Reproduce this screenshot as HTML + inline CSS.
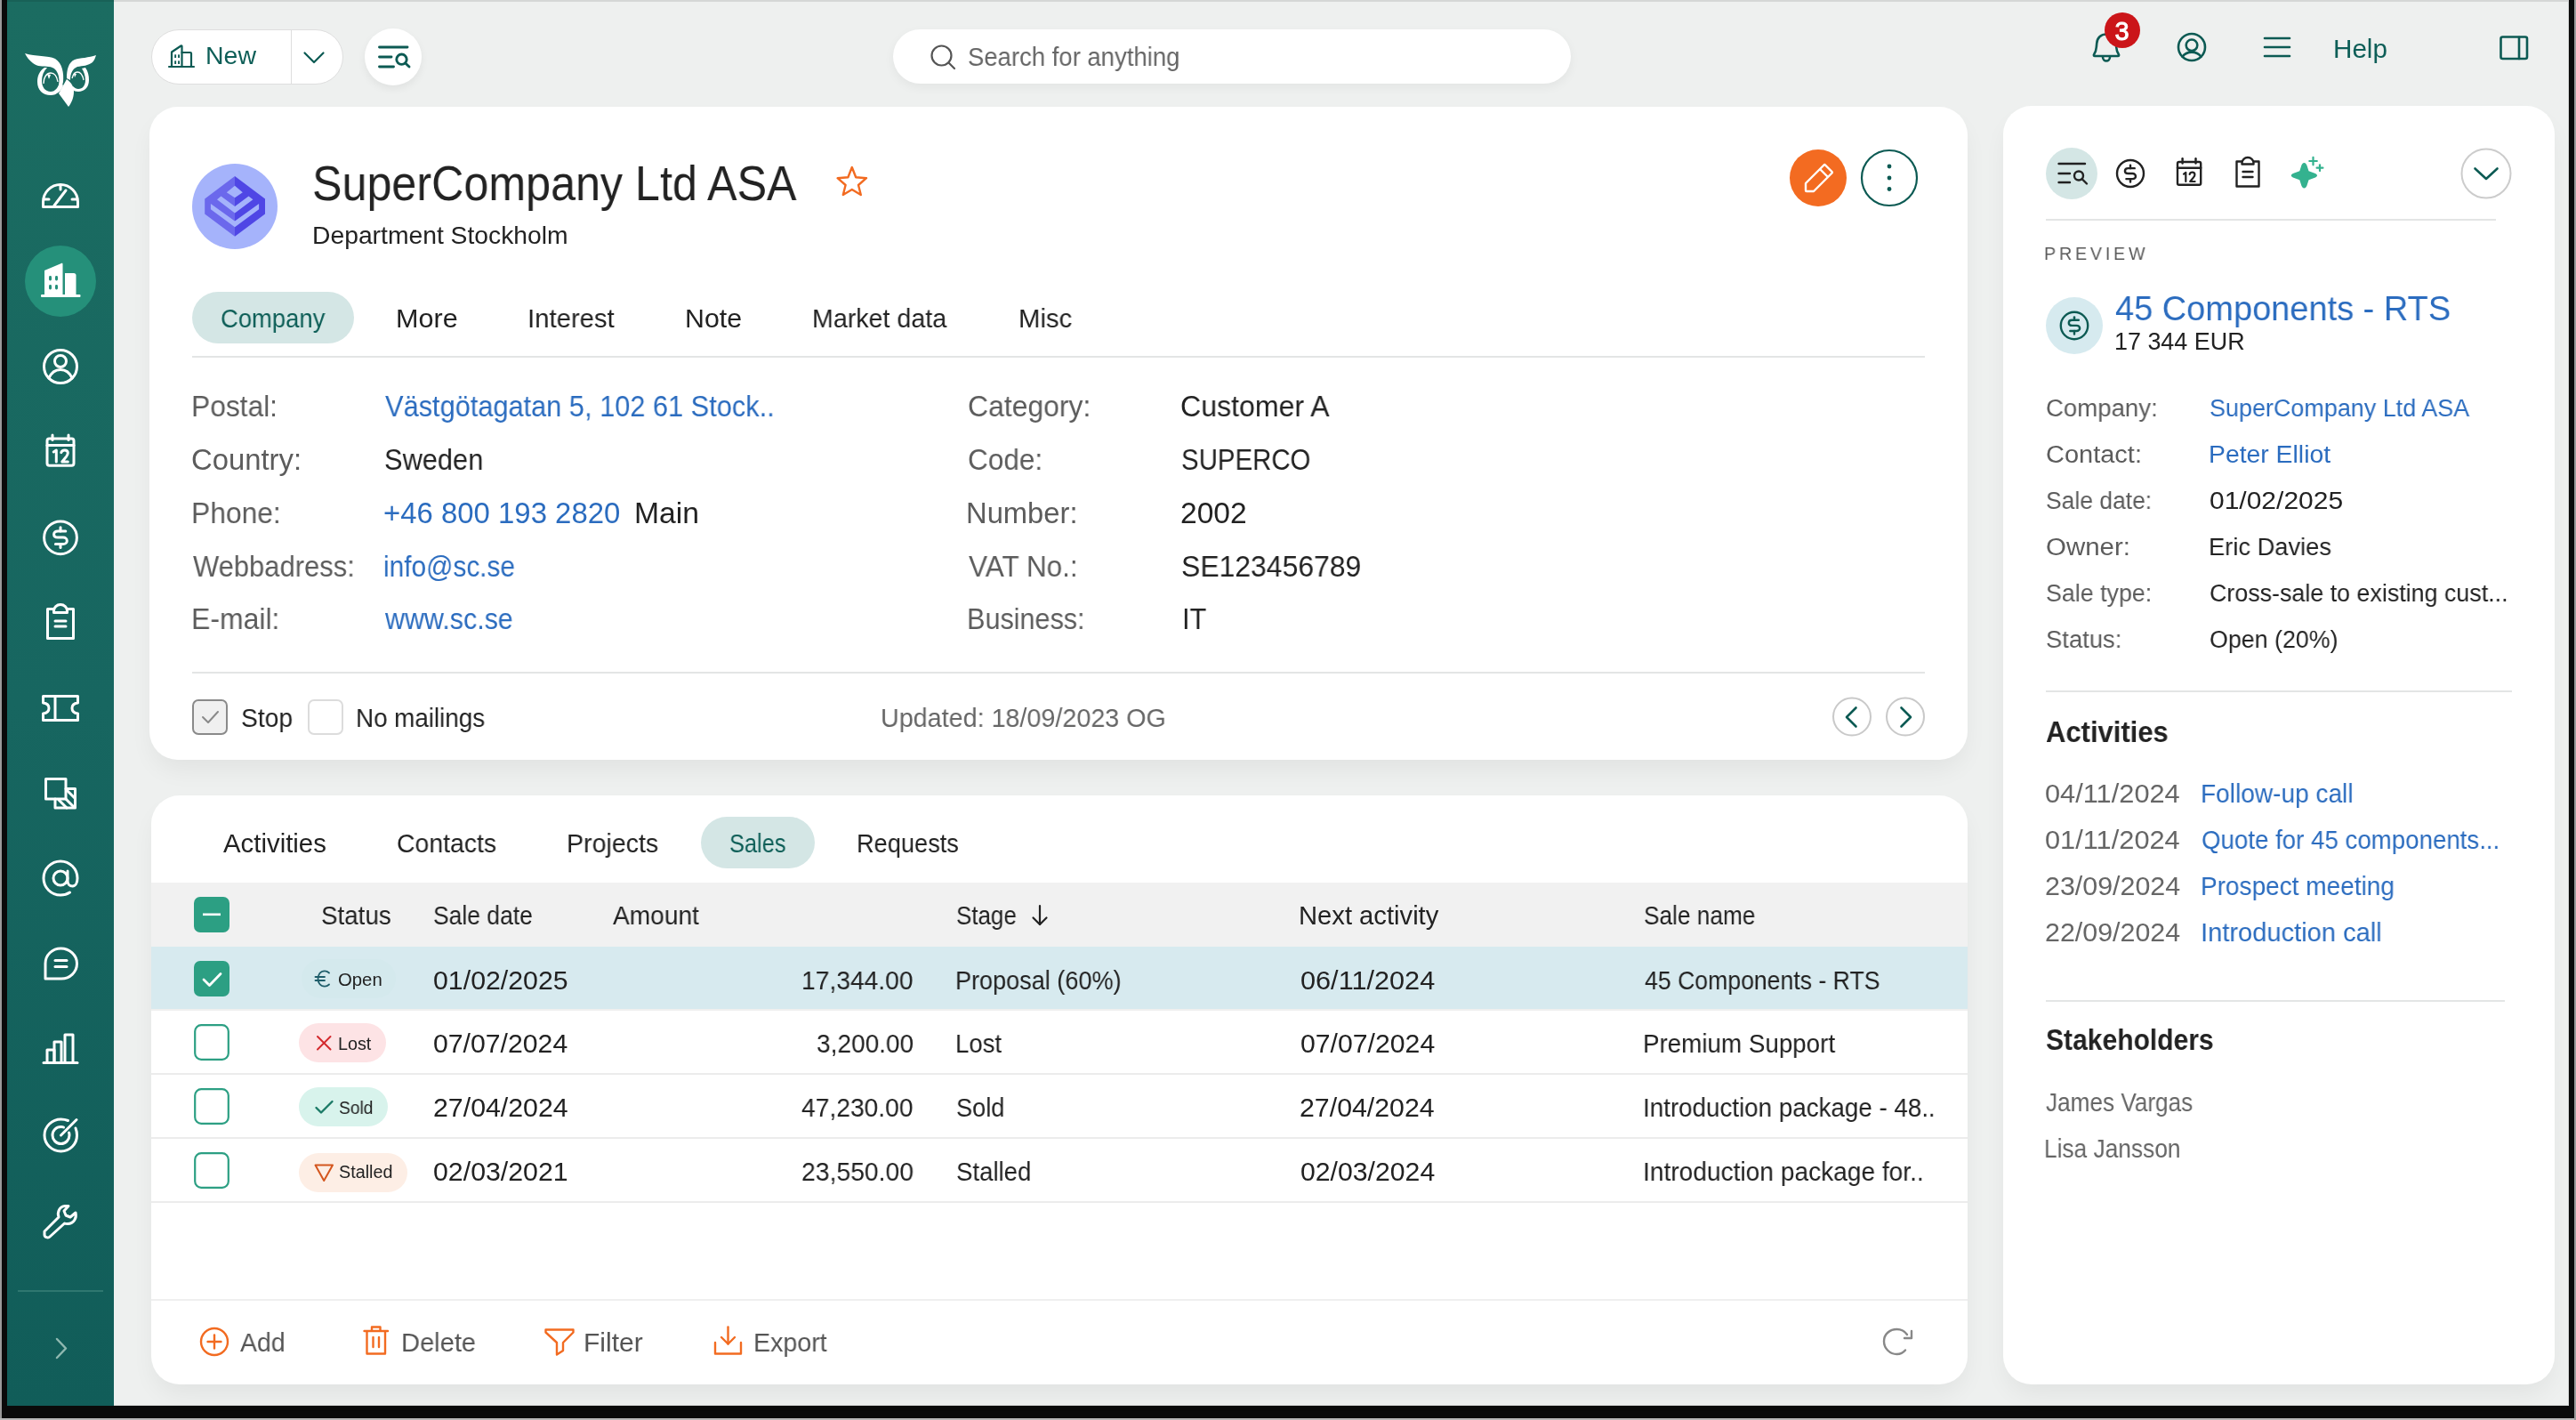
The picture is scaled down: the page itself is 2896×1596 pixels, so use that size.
<!DOCTYPE html>
<html><head><meta charset="utf-8">
<style>
html,body{margin:0;padding:0;width:2896px;height:1596px;overflow:hidden;}
body{position:relative;background:#0a0a0a;font-family:"Liberation Sans",sans-serif;}
.a{position:absolute;box-sizing:border-box;}
.t{position:absolute;white-space:nowrap;line-height:0;height:0;transform-origin:0 0;will-change:transform;font-family:"Liberation Sans",sans-serif;}
svg{position:absolute;overflow:visible;will-change:transform;}
#checkL{left:0;top:0;width:2px;height:1596px;background:#9a9a9a}
#checkB{left:0;top:1594px;width:2896px;height:2px;background:#b8b8b8}
#checkR{left:2894px;top:0;width:2px;height:1596px;background:#9a9a9a}
#win{left:8px;top:0;width:2880px;height:1580px;background:#eef0ef;overflow:hidden;border-radius:0 0 4px 4px;}
#topline{left:128px;top:0;width:2760px;height:2px;background:#d5d7d6;}
#side{left:8px;top:0;width:120px;height:1580px;background:linear-gradient(180deg,#1b6c61 0%,#176660 50%,#115d59 100%);}
.card{position:absolute;background:#fff;border-radius:32px;box-shadow:0 14px 28px -4px rgba(0,0,0,0.06);}
.pill{position:absolute;background:#d4e6e5;border-radius:29px;}
.line{position:absolute;background:#e4e6e6;height:2px;}
</style></head><body>
<div class="a" id="checkL"></div><div class="a" id="checkB"></div><div class="a" id="checkR"></div>
<div class="a" id="win"></div>
<div class="a" id="topline"></div>
<div class="a" style="left:2886.5px;top:0;width:1.5px;height:1580px;background:#d3d5d4"></div>
<div class="a" style="left:128px;top:1578.5px;width:2760px;height:1.5px;background:#d3d5d4"></div>
<div class="a" id="side"></div>
<div class="a" style="left:8px;top:0;width:120px;height:2px;background:rgba(0,0,0,0.1)"></div>

<!-- sidebar logo -->
<svg style="left:20px;top:40px" width="100" height="90" viewBox="0 0 100 90">
  <g fill="#fff">
    <!-- left brow -->
    <path d="M8 20 C20 24 34 22 42 26 C50 31 52 42 51 52 C50 57 48.5 60.5 46.5 63 L44.5 60 C46.5 56 47 51 46 46 C44.5 39 40.5 35.5 35 35 C28 34.5 22 35 17 31 C13 28 10 24 8 20 Z"/>
    <!-- right brow -->
    <path d="M88 22 C80 25 70 25 64 27 C57 30 55 38 55 48 L59 50 C59 42 62 37 67 35 C73 34 79 34 84 30 C86 28 87 25 88 22 Z"/>
    <!-- left eye ring -->
    <path d="M30 36 C24 40 22 46 22 52 C22 61 28 67 37 67 C44 67 49 62 51 56 L47 52 C46 58 42 63 37 63 C31 63 27 58 27 51 C27 45 29 40 33 36 Z"/>
    <!-- right eye ring -->
    <path d="M76 36 C79 40 80 45 80 50 C80 58 75 63 68 63 C65 63 63 62 62 61 L62 57 C64 59 66 60 68 60 C73 60 76 56 76 50 C76 45 74 40 72 37 Z"/>
    <!-- beak -->
    <path d="M46 65 L55 49 C60 53 63 57 63 63 C63 70 60 76 57 80 Z"/>
  </g>
  <g fill="none" stroke="#fff" stroke-width="1.3">
    <path d="M29 54 C29 46 33 42 37 42 C41 42 44 46 45 52"/>
    <path d="M61 48 C62 44 64 41 67 41 C71 41 73 45 74 50"/>
  </g>
  <path d="M33 43 L35 49 L37 44 Z" fill="#fff"/>
  <path d="M63 43 L64 47 L66 43 Z" fill="#fff"/>
</svg>

<!-- sidebar icons -->
<div class="a" style="left:28px;top:276px;width:80px;height:80px;border-radius:40px;background:#25907a"></div>
<g id="sideicons"></g>
<svg style="left:0;top:0" width="140" height="1580" viewBox="0 0 140 1580">
 <g fill="none" stroke="#fff" stroke-width="3" stroke-linecap="round" stroke-linejoin="round">
  <!-- speedometer 47-89 x 205-234 -->
  <path d="M48.5 232.5 L87.5 232.5 L87.5 227 A19.5 19.5 0 0 0 48.5 227 Z"/>
  <path d="M68 208 L68 213"/><path d="M50 224 L55 224"/><path d="M81 224 L86 224"/>
  <path d="M61 231 L74 214"/>
  <!-- contact 48.5-87.3 x 392-432 -->
  <circle cx="68" cy="412" r="18.5"/>
  <circle cx="68" cy="406" r="6.5"/>
  <path d="M55 425 C58 418 63 415.5 68 415.5 C73 415.5 78 418 81 425"/>
  <!-- calendar 50-86 x 487-526 -->
  <rect x="53" y="493" width="30" height="30.2" rx="2.5"/>
  <path d="M53 500.5 L83 500.5"/><path d="M59 489 L59 494.5"/><path d="M77 489 L77 494.5"/>
  <path d="M60.2 508 L63.3 506 L63.3 519"/>
  <path d="M68.8 508.6 C69.3 506.6 70.9 505.9 72.8 505.9 C74.9 505.9 76.3 507.2 76.3 509.1 C76.3 510.6 75.6 511.8 74.6 513.1 L69.8 519 L76.3 519"/>
  <!-- dollar 48.6-87.4 x 584-623 -->
  <circle cx="68" cy="604.3" r="18.4"/>
  <path d="M 73.80 596.90 L 65.00 596.90 C 62.40 596.90 60.60 598.50 60.60 600.60 C 60.60 602.70 62.40 604.10 65.00 604.10 L 71.00 604.10 C 73.40 604.10 75.30 605.70 75.30 607.90 C 75.30 609.90 73.40 611.50 71.00 611.50 L 62.40 611.50"/>
  <path d="M68.00 592.80 L68.00 596.90"/><path d="M68.00 611.50 L68.00 615.60"/>
  <!-- clipboard 51-84.6 x 679-719.5 -->
  <path d="M60 684.5 L53.5 684.5 L53.5 717.5 L82.5 717.5 L82.5 684.5 L76 684.5"/>
  <path d="M60.5 688.5 L60.5 686.5 A7.5 7 0 0 1 75.5 686.5 L75.5 688.5 Z"/>
  <path d="M62 698 L74 698"/><path d="M62 704 L74 704"/>
  <!-- ticket 47-89 x 781-811 -->
  <path d="M48.5 782.5 L87.5 782.5 L87.5 790 C83 790.5 81 793 81 796 C81 799 83 801.5 87.5 802 L87.5 809.5 L48.5 809.5 L48.5 802 C53 801.5 55 799 55 796 C55 793 53 790.5 48.5 790 Z"/>
  <path d="M62 783 L62 809"/>
  <!-- screen 50-86 x 874.5-910 -->
  <rect x="51.5" y="875.5" width="22.5" height="22.5"/>
  <path d="M74 886.5 L84.5 886.5 L84.5 908 L62 908 L62 898"/>
  <path d="M75 888 L84 897"/><path d="M66 899 L75 908"/><path d="M74 898 L83 907"/>
  <!-- @ 48-88 x 967-1006 -->
  <circle cx="68" cy="987" r="8"/>
  <path d="M76 979 L76 990 C76 994 78.5 996 81.5 996 C85 996 87 992 87 987 C87 976.5 78.5 968 68 968 C57.5 968 49 976.5 49 987 C49 997.5 57.5 1006 68 1006 C72 1006 75.5 1005 78.5 1003"/>
  <!-- chat 49.5-88 x 1065-1101.5 -->
  <path d="M51 1100 L51 1083 C51 1073 59 1066 68.5 1066 C78 1066 86.5 1073.5 86.5 1083 C86.5 1092.5 78.5 1100 69 1100 Z"/>
  <path d="M62 1079.5 L75 1079.5"/><path d="M62 1086.5 L75 1086.5"/>
  <!-- chart 48-87 x 1161.5-1196 -->
  <path d="M49 1194.5 L87 1194.5"/>
  <path d="M53 1194 L53 1180 L61 1180 L61 1194"/>
  <path d="M61 1194 L61 1171 L69 1171 L69 1194"/>
  <path d="M73 1194 L73 1163 L82 1163 L82 1194"/>
  <!-- target 48-88 x 1256-1295 -->
  <path d="M85 1268 C86 1270.5 86.5 1273 86.5 1276 C86.5 1286 78.5 1294 68.5 1294 C58.5 1294 50 1286 50 1276 C50 1266 58.5 1258 68.5 1258 C71.5 1258 74 1258.5 76.5 1259.5"/>
  <path d="M77.5 1273 C78 1274 78 1275 78 1276 C78 1281 74 1285.5 68.5 1285.5 C63 1285.5 59 1281 59 1276 C59 1270.5 63 1266.5 68.5 1266.5 C69.5 1266.5 70.5 1266.5 71.5 1267"/>
  <path d="M68.5 1276 L86 1258.5"/>
  <!-- wrench 48-88 x 1354-1391 -->
  <path d="M50 1384 L66 1368 C64 1362 67 1356 73 1355.5 L77 1355.5 L72 1361 L74 1366 L79 1368 L85 1363 C86.5 1369 83 1375 76 1375.5 C74.5 1375.5 73.5 1375.5 72.5 1375 L56 1390 C54 1392 50 1390.5 50 1388 Z"/>
 </g>
 <g fill="#fff">
  <!-- company building 45.6-90.7 x 295-334 -->
  <path d="M50 331 L50 304 L69 296 C70 295.5 70.5 296 70.5 297 L70.5 331 Z"/>
  <path d="M73 331 L73 307 L83 307 C84.5 307 85.5 308 85.5 309.5 L85.5 331 Z"/>
  <rect x="46" y="331" width="44.5" height="3" rx="1"/>
 </g>
 <g fill="#25907a">
  <rect x="55" y="310" width="3" height="5.5" rx="1.4"/><rect x="62" y="310" width="3" height="5.5" rx="1.4"/>
  <rect x="55" y="320" width="3" height="5.5" rx="1.4"/><rect x="62" y="320" width="3" height="5.5" rx="1.4"/>
 </g>
 
 <rect x="20" y="1450" width="96" height="2" fill="#2f7770"/>
 <path d="M64 1505 L74 1515.5 L64 1526" fill="none" stroke="#8fb8b0" stroke-width="2.5" stroke-linecap="round" stroke-linejoin="round"/>
</svg>

<!-- top bar -->
<div class="a" style="left:170px;top:33px;width:216px;height:62px;border-radius:31px;background:#fff;border:1.5px solid #dedede"></div>
<div class="a" style="left:326.5px;top:34px;width:1.5px;height:60px;background:#dedede"></div>
<svg style="left:0;top:0" width="500" height="120" viewBox="0 0 500 120">
 <g fill="none" stroke="#0c5a53" stroke-width="2.2" stroke-linecap="round" stroke-linejoin="round">
  <path d="M190 75 L218 75"/>
  <path d="M193 75 L193 58.5 L203.5 51.5 C204 51.2 204.5 51.5 204.5 52 L204.5 75"/>
  <path d="M204.5 59 L214 59 C214.6 59 215 59.4 215 60 L215 75"/>
  <path d="M342.5 59.5 L353 70 L363.5 59.5"/>
 </g>
 <g fill="#0c5a53"><rect x="196.2" y="61.2" width="1.9" height="3.8" rx=".5"/><rect x="200.1" y="61.2" width="1.9" height="3.8" rx=".5"/><rect x="196.2" y="68.2" width="1.9" height="3.8" rx=".5"/><rect x="200.1" y="68.2" width="1.9" height="3.8" rx=".5"/></g>
</svg>
<div class="a" style="left:410px;top:32px;width:64px;height:64px;border-radius:32px;background:#fff;box-shadow:0 4px 10px rgba(0,0,0,0.06)"></div>
<svg style="left:0;top:0" width="500" height="120" viewBox="0 0 500 120">
 <g fill="none" stroke="#0c5a53" stroke-width="2.9" stroke-linecap="round">
  <path d="M426.5 53 L458 53"/><path d="M426.5 64 L440 64"/><path d="M426.5 75 L442.5 75"/>
  <circle cx="451.5" cy="66.7" r="5.7"/><path d="M455.8 71 L460 75"/>
 </g>
</svg>
<div class="a" style="left:1004px;top:33px;width:762px;height:61px;border-radius:31px;background:#fff;box-shadow:0 4px 12px rgba(0,0,0,0.05)"></div>
<svg style="left:0;top:0" width="2896" height="120" viewBox="0 0 2896 120">
 <g fill="none" stroke="#555" stroke-width="2.2" stroke-linecap="round">
  <circle cx="1058.5" cy="62.5" r="11"/><path d="M1066.5 70.5 L1073 77"/>
 </g>
 <g fill="none" stroke="#0c5a53" stroke-width="2.6" stroke-linecap="round" stroke-linejoin="round">
  <!-- bell 2353-2383 x 37-69 -->
  <path d="M2355 63 C2354 63 2353.5 62 2354.2 61 C2355.5 59 2356.5 57 2356.8 53 L2357.2 49 C2357.5 42.5 2362 38.5 2368 38.5 C2374 38.5 2378.5 42.5 2378.8 49 L2379.2 53 C2379.5 57 2380.5 59 2381.8 61 C2382.5 62 2382 63 2381 63 Z"/>
  <path d="M2364 64 C2364 67 2366 68.5 2368 68.5 C2370 68.5 2372 67 2372 64"/>
  <!-- user 2448-2480 x 37-69 -->
  <circle cx="2464" cy="53" r="15"/>
  <circle cx="2464" cy="50.8" r="6.3"/>
  <path d="M2453.5 63.8 C2456 60.2 2460 58.6 2464 58.6 C2468 58.6 2472 60.2 2474.5 63.8"/>
  <!-- hamburger 2545-2575 x 42-64 -->
  <path d="M2546 43 L2574 43"/><path d="M2546 53 L2574 53"/><path d="M2546 63 L2574 63"/>
  <!-- panel 2810-2842 x 40-67 -->
  <rect x="2811.5" y="41.5" width="29.5" height="24.5" rx="2"/>
  <path d="M2832 42 L2832 66"/>
 </g>
 <circle cx="2386" cy="34" r="20" fill="#cb1519"/>
 <text x="2385.5" y="45" font-family="Liberation Sans" font-weight="400" font-size="29" fill="#fff" stroke="#fff" stroke-width="0.9" text-anchor="middle">3</text>
</svg>

<!-- main card -->
<div class="card" style="left:168px;top:120px;width:2044px;height:734px"></div>
<!-- avatar -->
<div class="a" style="left:216px;top:184px;width:96px;height:96px;border-radius:48px;background:#a5b3fb"></div>
<svg style="left:0;top:0" width="2300" height="900" viewBox="0 0 2300 900">
 <!-- logo -->
 <g>
  <polygon points="264,198 264,265.8 230.2,240.5 230.2,223.5" fill="#6b68ec"/>
  <polygon points="264,198 298,223.5 298,240.5 264,265.8" fill="#4f46e5"/>
  <g fill="#a5b3fb">
  <polygon points="264,208.8 272.8,216.2 264,222.3 254.8,216.2"/>
  <polygon points="248.5,220.6 264,232 279.5,220.6 284.4,224.3 264,239.4 244,224.3"/>
  <polygon points="236.9,229 264,248.5 291.1,229 291.1,235.2 264,255.2 236.9,235.2"/>
  </g>
 </g>
 <!-- star 940-975 x 187-220 -->
 <path d="M957.8 188 L962.2 199.3 L974 200.2 L965 208 L967.8 219 L957.8 213 L947.8 219 L950.6 208 L941.6 200.2 L953.4 199.3 Z" fill="none" stroke="#f26b21" stroke-width="2.4" stroke-linejoin="round"/>
 <!-- edit -->
 <circle cx="2044" cy="200" r="32" fill="#f36b21"/>
 <g fill="none" stroke="#fff" stroke-width="2.4" stroke-linejoin="round">
  <path d="M2030 206 L2050.5 185.5 C2051 185 2051.5 185 2052 185.5 L2059.5 193 C2060 193.5 2060 194 2059.5 194.5 L2039 215 L2031 215 C2030.5 215 2030 214.5 2030 214 Z"/>
  <path d="M2046 190 L2055 199"/>
 </g>
 <circle cx="2124" cy="200" r="31" fill="none" stroke="#0c5a53" stroke-width="2.2"/>
 <g fill="#0c5a53"><circle cx="2124" cy="187" r="2.4"/><circle cx="2124" cy="200" r="2.4"/><circle cx="2124" cy="212.5" r="2.4"/></g>
 <!-- dividers -->
 <rect x="216" y="400" width="1948" height="2" fill="#e3e5e5"/>
 <rect x="216" y="755" width="1948" height="2" fill="#e3e5e5"/>
 <!-- checkboxes -->
 <rect x="217" y="787" width="38" height="38" rx="6" fill="#f0f0f0" stroke="#8a8a8a" stroke-width="2"/>
 <path d="M228 806 L234 812 L245 800" fill="none" stroke="#8a8a8a" stroke-width="2" stroke-linecap="round" stroke-linejoin="round"/>
 <rect x="347" y="787" width="38" height="38" rx="6" fill="#fff" stroke="#dcdcdc" stroke-width="2"/>
 <!-- prev/next -->
 <circle cx="2082" cy="805.5" r="21" fill="#fff" stroke="#c9c9c9" stroke-width="2"/>
 <circle cx="2142" cy="805.5" r="21" fill="#fff" stroke="#c9c9c9" stroke-width="2"/>
 <g fill="none" stroke="#0c5a53" stroke-width="2.6" stroke-linecap="round" stroke-linejoin="round">
  <path d="M2086.5 795.5 L2076 806 L2086.5 816.5"/>
  <path d="M2137.5 795.5 L2148 806 L2137.5 816.5"/>
 </g>
</svg>
<div class="pill" style="left:216px;top:328px;width:182px;height:58px"></div>


<!-- bottom card -->
<div class="card" style="left:170px;top:894px;width:2042px;height:662px;overflow:hidden">
  <div class="a" style="left:0;top:98px;width:2042px;height:72px;background:#f1f1f1"></div>
  <div class="a" style="left:0;top:170px;width:2042px;height:70px;background:#d7eaef"></div>
  <div class="a" style="left:0;top:240px;width:2042px;height:2px;background:#efefef"></div>
  <div class="a" style="left:0;top:312px;width:2042px;height:2px;background:#ececec"></div>
  <div class="a" style="left:0;top:384px;width:2042px;height:2px;background:#ececec"></div>
  <div class="a" style="left:0;top:456px;width:2042px;height:2px;background:#ececec"></div>
  <div class="a" style="left:0;top:566px;width:2042px;height:2px;background:#efefef"></div>
</div>
<div class="pill" style="left:788px;top:918px;width:128px;height:58px"></div>
<svg style="left:0;top:0" width="2300" height="1600" viewBox="0 0 2300 1600">
 <!-- header checkbox -->
 <rect x="218" y="1008" width="40" height="40" rx="7" fill="#2c9f83"/>
 <rect x="228" y="1026.5" width="20" height="2.6" fill="#fff"/>
 <!-- stage arrow 1159-1179 -->
 <g fill="none" stroke="#222" stroke-width="2.2" stroke-linecap="round" stroke-linejoin="round">
  <path d="M1169 1018 L1169 1039"/><path d="M1161.5 1031.5 L1169 1039 L1176.5 1031.5"/>
 </g>
 <!-- row1 checkbox -->
 <rect x="218" y="1080" width="40" height="40" rx="7" fill="#2c9f83"/>
 <path d="M229 1101 L235.5 1107.5 L248 1094.5" fill="none" stroke="#fff" stroke-width="2.8" stroke-linecap="round" stroke-linejoin="round"/>
 <g fill="none" stroke="#2c9f83" stroke-width="2.2">
  <rect x="219.2" y="1152.2" width="37.6" height="38.6" rx="7"/>
  <rect x="219.2" y="1224.2" width="37.6" height="38.6" rx="7"/>
  <rect x="219.2" y="1296.2" width="37.6" height="38.6" rx="7"/>
 </g>
 <!-- badges -->
 <rect x="339" y="1078" width="106" height="44" rx="22" fill="#d4e9ed"/>
 <rect x="336" y="1150" width="98" height="44" rx="22" fill="#fde3e5"/>
 <rect x="336" y="1222" width="100" height="44" rx="22" fill="#d8f3ec"/>
 <rect x="336" y="1296" width="122" height="44" rx="22" fill="#fdeee5"/>
 <!-- euro 355-370 x 1091-1109 -->
 <g fill="none" stroke="#1f5d6a" stroke-width="1.8" stroke-linecap="round">
  <path d="M370 1093.5 C368.5 1092 367 1091.3 365 1091.3 C360 1091.3 357.5 1095.5 357.5 1100 C357.5 1104.5 360 1108.7 365 1108.7 C367 1108.7 368.5 1108 370 1106.5"/>
  <path d="M354.5 1098 L365 1098"/><path d="M354.5 1102 L365 1102"/>
 </g>
 <g fill="none" stroke="#d42a2e" stroke-width="2" stroke-linecap="round"><path d="M357 1165 L371.5 1179.5"/><path d="M371.5 1165 L357 1179.5"/></g>
 <path d="M355.5 1245 L361 1250.5 L373.5 1238" fill="none" stroke="#1b7a66" stroke-width="2.4" stroke-linecap="round" stroke-linejoin="round"/>
 <path d="M354.5 1309.5 L374 1309.5 L364.2 1327 Z" fill="none" stroke="#d4561e" stroke-width="2" stroke-linejoin="round"/>
 <!-- toolbar icons -->
 <g fill="none" stroke="#f26b21" stroke-width="2.4" stroke-linecap="round" stroke-linejoin="round">
  <circle cx="241" cy="1508" r="15"/><path d="M241 1500.5 L241 1515.5"/><path d="M233.5 1508 L248.5 1508"/>
  <path d="M409.5 1496 L436 1496"/><path d="M418 1495.5 L418 1491.5 L427.5 1491.5 L427.5 1495.5"/>
  <path d="M412.5 1496.5 L412.5 1521.5 L433 1521.5 L433 1496.5"/><path d="M419.5 1503 L419.5 1514"/><path d="M426 1503 L426 1514"/>
  <path d="M613.5 1494.5 L644.5 1494.5 L644.5 1497.5 L633 1509 L633 1518 L626 1522.5 L626 1509 L613.5 1497.5 Z"/>
  <path d="M818.5 1491.5 L818.5 1510.5"/><path d="M811 1503 L818.5 1510.5 L826 1503"/><path d="M804 1509 L804 1521.5 L833 1521.5 L833 1509"/>
 </g>
 <g fill="none" stroke="#888" stroke-width="2.4" stroke-linecap="round" stroke-linejoin="round">
  <path d="M2142 1517.5 C2139.5 1520.5 2136.5 1522 2132.5 1522 C2124.5 1522 2118 1515.5 2118 1507.5 C2118 1499.5 2124.5 1494 2132.5 1494 C2137.5 1494 2141.5 1496.5 2144 1500"/>
  <path d="M2149 1496 L2149 1504 L2141 1504"/>
 </g>
</svg>


<!-- right panel -->
<div class="card" style="left:2252px;top:119px;width:620px;height:1437px"></div>
<svg style="left:0;top:0" width="2896" height="1600" viewBox="0 0 2896 1600">
 <circle cx="2329" cy="195" r="29" fill="#d4e6e5"/>
 <g fill="none" stroke="#222" stroke-width="2.4" stroke-linecap="round" stroke-linejoin="round">
  <path d="M2314.5 184 L2344 184"/><path d="M2314.5 195 L2327 195"/><path d="M2314.5 205 L2327 205"/>
  <circle cx="2337" cy="197.5" r="5"/><path d="M2340.5 201 L2346 206.5"/>
  <!-- dollar 2379-2411 -->
  <circle cx="2395" cy="195" r="15"/>
  <path d="M 2399.76 189.13 L 2392.54 189.13 C 2390.41 189.13 2388.93 190.44 2388.93 192.17 C 2388.93 193.89 2390.41 195.04 2392.54 195.04 L 2397.46 195.04 C 2399.43 195.04 2400.99 196.35 2400.99 198.15 C 2400.99 199.79 2399.43 201.10 2397.46 201.10 L 2390.41 201.10"/>
  <path d="M2395.00 185.77 L2395.00 189.13"/><path d="M2395.00 201.10 L2395.00 204.47"/>
  <!-- calendar 2446-2476 -->
  <rect x="2448" y="182" width="26.2" height="25.8" rx="1.8"/>
  <path d="M2448 188.7 L2474.2 188.7"/><path d="M2453.6 178.2 L2453.6 183.5"/><path d="M2468.5 178.2 L2468.5 183.5"/>
  <path d="M2455 195.6 L2457.3 194 L2457.3 204" stroke-width="2.2"/>
  <path d="M2461.6 196 C2462 194.4 2463.2 193.7 2464.7 193.7 C2466.3 193.7 2467.4 194.7 2467.4 196.2 C2467.4 197.4 2466.8 198.4 2466 199.4 L2462.2 204 L2467.6 204" stroke-width="2.2"/>
  <!-- clipboard 2513-2540.5 -->
  <path d="M2520 181.5 L2514.5 181.5 L2514.5 209.5 L2539.5 209.5 L2539.5 181.5 L2534 181.5"/>
  <path d="M2520.5 184.5 L2520.5 183 A6.5 6 0 0 1 2533.5 183 L2533.5 184.5 Z"/>
  <path d="M2521.5 193 L2532.5 193"/><path d="M2521.5 199 L2532.5 199"/>
 </g>
 
 <!-- sparkle -->
 <path d="M2590.4 183 C2592 183 2593 184.5 2593.5 186 L2595.5 192.3 L2602.3 194.8 C2604 195.4 2605 196.4 2605 197.3 C2605 198.2 2604 199.2 2602.3 199.8 L2595.5 202.3 L2593.5 208.6 C2593 210.1 2592 211.6 2590.4 211.6 C2588.8 211.6 2587.8 210.1 2587.3 208.6 L2585.3 202.3 L2578.5 199.8 C2576.8 199.2 2575.8 198.2 2575.8 197.3 C2575.8 196.4 2576.8 195.4 2578.5 194.8 L2585.3 192.3 L2587.3 186 C2587.8 184.5 2588.8 183 2590.4 183 Z" fill="#34b28f"/>
 <g stroke="#34b28f" stroke-width="2.2" stroke-linecap="round"><path d="M2600.5 176.8 L2600.5 185.3"/><path d="M2596.3 181 L2604.8 181"/><path d="M2608 185.3 L2608 192.1"/><path d="M2604.6 188.7 L2611.4 188.7"/></g>
 <circle cx="2795" cy="195" r="27.5" fill="#fff" stroke="#cccccc" stroke-width="2"/>
 <path d="M2782.5 189.5 L2795 201 L2807.5 189.5" fill="none" stroke="#0c5a53" stroke-width="2.6" stroke-linecap="round" stroke-linejoin="round"/>
 <rect x="2300" y="246" width="506" height="2" fill="#e3e5e5"/>
 <circle cx="2332" cy="366" r="32" fill="#d6eaef"/>
 <g fill="none" stroke="#0c5a53" stroke-width="2.4" stroke-linecap="round">
  <circle cx="2332" cy="366" r="15.2"/>
  <path d="M 2336.87 359.78 L 2329.48 359.78 C 2327.30 359.78 2325.78 361.13 2325.78 362.89 C 2325.78 364.66 2327.30 365.83 2329.48 365.83 L 2334.52 365.83 C 2336.54 365.83 2338.13 367.18 2338.13 369.02 C 2338.13 370.70 2336.54 372.05 2334.52 372.05 L 2327.30 372.05"/>
  <path d="M2332.00 356.34 L2332.00 359.78"/><path d="M2332.00 372.05 L2332.00 375.49"/>
 </g>
 <rect x="2300" y="776" width="524" height="2" fill="#e3e5e5"/>
 <rect x="2300" y="1124" width="516" height="2" fill="#e3e5e5"/>
</svg>


<div class="t" style="left:231.27px;top:62.23px;font-size:28.2px;color:#0d5e57;font-weight:400;transform:scaleX(1.0100);">New</div>
<div class="t" style="left:1088.14px;top:63.99px;font-size:28.9px;color:#666666;font-weight:400;transform:scaleX(0.9513);">Search for anything</div>
<div class="t" style="left:2622.70px;top:54.74px;font-size:29.61px;color:#0d5e57;font-weight:400;transform:scaleX(0.9933);">Help</div>
<div class="t" style="left:351.44px;top:206.15px;font-size:54.99px;color:#222222;font-weight:400;transform:scaleX(0.9136);">SuperCompany Ltd ASA</div>
<div class="t" style="left:350.79px;top:265.47px;font-size:27.49px;color:#222222;font-weight:400;transform:scaleX(1.0289);">Department Stockholm</div>
<div class="t" style="left:247.72px;top:358.24px;font-size:29.61px;color:#0d5e57;font-weight:400;transform:scaleX(0.9255);">Company</div>
<div class="t" style="left:444.61px;top:358.24px;font-size:29.61px;color:#222222;font-weight:400;transform:scaleX(1.0321);">More</div>
<div class="t" style="left:592.71px;top:358.24px;font-size:29.61px;color:#222222;font-weight:400;transform:scaleX(0.9893);">Interest</div>
<div class="t" style="left:770.13px;top:358.24px;font-size:29.61px;color:#222222;font-weight:400;transform:scaleX(1.0249);">Note</div>
<div class="t" style="left:912.77px;top:358.24px;font-size:29.61px;color:#222222;font-weight:400;transform:scaleX(0.9661);">Market data</div>
<div class="t" style="left:1144.71px;top:358.24px;font-size:29.61px;color:#222222;font-weight:400;transform:scaleX(0.9901);">Misc</div>
<div class="t" style="left:214.52px;top:456.76px;font-size:32.43px;color:#5c5c5c;font-weight:400;transform:scaleX(0.9789);">Postal:</div>
<div class="t" style="left:215.46px;top:516.76px;font-size:32.43px;color:#5c5c5c;font-weight:400;transform:scaleX(1.0126);">Country:</div>
<div class="t" style="left:214.52px;top:576.76px;font-size:32.43px;color:#5c5c5c;font-weight:400;transform:scaleX(0.9803);">Phone:</div>
<div class="t" style="left:217.00px;top:636.76px;font-size:32.43px;color:#5c5c5c;font-weight:400;transform:scaleX(0.9544);">Webbadress:</div>
<div class="t" style="left:214.50px;top:695.76px;font-size:32.43px;color:#5c5c5c;font-weight:400;transform:scaleX(0.9850);">E-mail:</div>
<div class="t" style="left:433.00px;top:456.76px;font-size:32.43px;color:#2b6cbf;font-weight:400;transform:scaleX(0.9485);">Västgötagatan 5, 102 61 Stock..</div>
<div class="t" style="left:432.04px;top:516.76px;font-size:32.43px;color:#222222;font-weight:400;transform:scaleX(0.9497);">Sweden</div>
<div class="t" style="left:431.46px;top:576.76px;font-size:32.43px;color:#2b6cbf;font-weight:400;transform:scaleX(1.0151);">+46 800 193 2820</div>
<div class="t" style="left:712.87px;top:576.76px;font-size:32.43px;color:#222222;font-weight:400;transform:scaleX(1.0389);">Main</div>
<div class="t" style="left:431.13px;top:636.76px;font-size:32.43px;color:#2b6cbf;font-weight:400;transform:scaleX(0.9203);">info@sc.se</div>
<div class="t" style="left:433.48px;top:695.76px;font-size:32.43px;color:#2b6cbf;font-weight:400;transform:scaleX(0.9386);">www.sc.se</div>
<div class="t" style="left:1087.50px;top:456.76px;font-size:32.43px;color:#5c5c5c;font-weight:400;transform:scaleX(0.9842);">Category:</div>
<div class="t" style="left:1087.52px;top:516.76px;font-size:32.43px;color:#5c5c5c;font-weight:400;transform:scaleX(0.9722);">Code:</div>
<div class="t" style="left:1086.44px;top:576.76px;font-size:32.43px;color:#5c5c5c;font-weight:400;transform:scaleX(1.0094);">Number:</div>
<div class="t" style="left:1089.00px;top:636.76px;font-size:32.43px;color:#5c5c5c;font-weight:400;transform:scaleX(0.9733);">VAT No.:</div>
<div class="t" style="left:1086.61px;top:695.76px;font-size:32.43px;color:#5c5c5c;font-weight:400;transform:scaleX(0.9435);">Business:</div>
<div class="t" style="left:1326.52px;top:456.76px;font-size:32.43px;color:#222222;font-weight:400;transform:scaleX(0.9895);">Customer A</div>
<div class="t" style="left:1328.08px;top:516.76px;font-size:32.43px;color:#222222;font-weight:400;transform:scaleX(0.9073);">SUPERCO</div>
<div class="t" style="left:1327.43px;top:576.76px;font-size:32.43px;color:#222222;font-weight:400;transform:scaleX(1.0360);">2002</div>
<div class="t" style="left:1328.00px;top:636.76px;font-size:32.43px;color:#222222;font-weight:400;transform:scaleX(0.9840);">SE123456789</div>
<div class="t" style="left:1328.60px;top:695.76px;font-size:32.43px;color:#222222;font-weight:400;transform:scaleX(0.9483);">IT</div>
<div class="t" style="left:271.12px;top:806.74px;font-size:29.61px;color:#222222;font-weight:400;transform:scaleX(0.9526);">Stop</div>
<div class="t" style="left:399.83px;top:806.74px;font-size:29.61px;color:#222222;font-weight:400;transform:scaleX(0.9376);">No mailings</div>
<div class="t" style="left:990.20px;top:806.74px;font-size:29.61px;color:#666666;font-weight:400;transform:scaleX(0.9699);">Updated: 18/09/2023 OG</div>
<div class="t" style="left:250.50px;top:947.99px;font-size:28.9px;color:#222222;font-weight:400;transform:scaleX(1.0167);">Activities</div>
<div class="t" style="left:445.67px;top:947.99px;font-size:28.9px;color:#222222;font-weight:400;transform:scaleX(0.9840);">Contacts</div>
<div class="t" style="left:636.77px;top:947.99px;font-size:28.9px;color:#222222;font-weight:400;transform:scaleX(0.9878);">Projects</div>
<div class="t" style="left:820.21px;top:947.99px;font-size:28.9px;color:#0d5e57;font-weight:400;transform:scaleX(0.8796);">Sales</div>
<div class="t" style="left:962.87px;top:947.99px;font-size:28.9px;color:#222222;font-weight:400;transform:scaleX(0.9417);">Requests</div>
<div class="t" style="left:361.13px;top:1028.99px;font-size:28.9px;color:#222222;font-weight:400;transform:scaleX(0.9610);">Status</div>
<div class="t" style="left:487.17px;top:1028.99px;font-size:28.9px;color:#222222;font-weight:400;transform:scaleX(0.9163);">Sale date</div>
<div class="t" style="left:689.00px;top:1028.99px;font-size:28.9px;color:#222222;font-weight:400;transform:scaleX(0.9730);">Amount</div>
<div class="t" style="left:1075.19px;top:1028.99px;font-size:28.9px;color:#222222;font-weight:400;transform:scaleX(0.8986);">Stage</div>
<div class="t" style="left:1460.22px;top:1028.99px;font-size:28.9px;color:#222222;font-weight:400;transform:scaleX(1.0103);">Next activity</div>
<div class="t" style="left:1848.18px;top:1028.99px;font-size:28.9px;color:#222222;font-weight:400;transform:scaleX(0.9082);">Sale name</div>
<div class="t" style="left:487.05px;top:1101.74px;font-size:29.61px;color:#222222;font-weight:400;transform:scaleX(1.0235);">01/02/2025</div>
<div class="t" style="left:901.14px;top:1101.74px;font-size:29.61px;color:#222222;font-weight:400;transform:scaleX(0.9532);">17,344.00</div>
<div class="t" style="left:1073.89px;top:1101.74px;font-size:29.61px;color:#222222;font-weight:400;transform:scaleX(0.9140);">Proposal (60%)</div>
<div class="t" style="left:1461.54px;top:1101.74px;font-size:29.61px;color:#222222;font-weight:400;transform:scaleX(1.0358);">06/11/2024</div>
<div class="t" style="left:1848.58px;top:1101.74px;font-size:29.61px;color:#222222;font-weight:400;transform:scaleX(0.8996);">45 Components - RTS</div>
<div class="t" style="left:487.06px;top:1172.74px;font-size:29.61px;color:#222222;font-weight:400;transform:scaleX(1.0203);">07/07/2024</div>
<div class="t" style="left:917.52px;top:1172.74px;font-size:29.61px;color:#222222;font-weight:400;transform:scaleX(0.9472);">3,200.00</div>
<div class="t" style="left:1073.85px;top:1172.74px;font-size:29.61px;color:#222222;font-weight:400;transform:scaleX(0.9301);">Lost</div>
<div class="t" style="left:1461.56px;top:1172.74px;font-size:29.61px;color:#222222;font-weight:400;transform:scaleX(1.0203);">07/07/2024</div>
<div class="t" style="left:1846.83px;top:1172.74px;font-size:29.61px;color:#222222;font-weight:400;transform:scaleX(0.9379);">Premium Support</div>
<div class="t" style="left:486.58px;top:1245.24px;font-size:29.61px;color:#222222;font-weight:400;transform:scaleX(1.0235);">27/04/2024</div>
<div class="t" style="left:901.16px;top:1245.24px;font-size:29.61px;color:#222222;font-weight:400;transform:scaleX(0.9531);">47,230.00</div>
<div class="t" style="left:1075.15px;top:1245.24px;font-size:29.61px;color:#222222;font-weight:400;transform:scaleX(0.9175);">Sold</div>
<div class="t" style="left:1461.08px;top:1245.24px;font-size:29.61px;color:#222222;font-weight:400;transform:scaleX(1.0235);">27/04/2024</div>
<div class="t" style="left:1846.83px;top:1245.24px;font-size:29.61px;color:#222222;font-weight:400;transform:scaleX(0.9374);">Introduction package - 48..</div>
<div class="t" style="left:487.05px;top:1316.74px;font-size:29.61px;color:#222222;font-weight:400;transform:scaleX(1.0235);">02/03/2021</div>
<div class="t" style="left:900.67px;top:1316.74px;font-size:29.61px;color:#222222;font-weight:400;transform:scaleX(0.9568);">23,550.00</div>
<div class="t" style="left:1075.14px;top:1316.74px;font-size:29.61px;color:#222222;font-weight:400;transform:scaleX(0.9324);">Stalled</div>
<div class="t" style="left:1461.56px;top:1316.74px;font-size:29.61px;color:#222222;font-weight:400;transform:scaleX(1.0203);">02/03/2024</div>
<div class="t" style="left:1846.80px;top:1316.74px;font-size:29.61px;color:#222222;font-weight:400;transform:scaleX(0.9496);">Introduction package for..</div>
<div class="t" style="left:380.07px;top:1101.16px;font-size:19.74px;color:#222222;font-weight:400;transform:scaleX(1.0302);">Open</div>
<div class="t" style="left:379.91px;top:1173.16px;font-size:19.74px;color:#222222;font-weight:400;transform:scaleX(0.9965);">Lost</div>
<div class="t" style="left:380.72px;top:1245.16px;font-size:19.74px;color:#222222;font-weight:400;transform:scaleX(0.9726);">Sold</div>
<div class="t" style="left:380.70px;top:1317.16px;font-size:19.74px;color:#222222;font-weight:400;transform:scaleX(1.0021);">Stalled</div>
<div class="t" style="left:270.00px;top:1509.24px;font-size:29.61px;color:#555555;font-weight:400;transform:scaleX(0.9604);">Add</div>
<div class="t" style="left:450.73px;top:1509.24px;font-size:29.61px;color:#555555;font-weight:400;transform:scaleX(0.9820);">Delete</div>
<div class="t" style="left:656.16px;top:1509.24px;font-size:29.61px;color:#555555;font-weight:400;transform:scaleX(1.0136);">Filter</div>
<div class="t" style="left:846.76px;top:1509.24px;font-size:29.61px;color:#555555;font-weight:400;transform:scaleX(0.9668);">Export</div>
<div class="t" style="left:2298.46px;top:284.92px;font-size:20.44px;color:#5a5a5a;font-weight:400;transform:scaleX(0.9600);letter-spacing:4px">PREVIEW</div>
<div class="t" style="left:2378.41px;top:345.82px;font-size:39.48px;color:#2b6cbf;font-weight:400;transform:scaleX(0.9621);">45 Components - RTS</div>
<div class="t" style="left:2377.32px;top:383.72px;font-size:26.79px;color:#222222;font-weight:400;transform:scaleX(1.0046);">17 344 EUR</div>
<div class="t" style="left:2299.71px;top:458.23px;font-size:28.2px;color:#5c5c5c;font-weight:400;transform:scaleX(0.9787);">Company:</div>
<div class="t" style="left:2299.64px;top:510.23px;font-size:28.2px;color:#5c5c5c;font-weight:400;transform:scaleX(1.0282);">Contact:</div>
<div class="t" style="left:2300.17px;top:562.23px;font-size:28.2px;color:#5c5c5c;font-weight:400;transform:scaleX(0.9388);">Sale date:</div>
<div class="t" style="left:2299.62px;top:614.23px;font-size:28.2px;color:#5c5c5c;font-weight:400;transform:scaleX(1.0457);">Owner:</div>
<div class="t" style="left:2300.16px;top:666.23px;font-size:28.2px;color:#5c5c5c;font-weight:400;transform:scaleX(0.9509);">Sale type:</div>
<div class="t" style="left:2300.14px;top:718.23px;font-size:28.2px;color:#5c5c5c;font-weight:400;transform:scaleX(0.9721);">Status:</div>
<div class="t" style="left:2484.16px;top:458.23px;font-size:28.2px;color:#2b6cbf;font-weight:400;transform:scaleX(0.9560);">SuperCompany Ltd ASA</div>
<div class="t" style="left:2482.78px;top:510.23px;font-size:28.2px;color:#2b6cbf;font-weight:400;transform:scaleX(1.0056);">Peter Elliot</div>
<div class="t" style="left:2484.06px;top:562.23px;font-size:28.2px;color:#222222;font-weight:400;transform:scaleX(1.0639);">01/02/2025</div>
<div class="t" style="left:2482.87px;top:614.23px;font-size:28.2px;color:#222222;font-weight:400;transform:scaleX(0.9677);">Eric Davies</div>
<div class="t" style="left:2483.74px;top:666.23px;font-size:28.2px;color:#222222;font-weight:400;transform:scaleX(0.9520);">Cross-sale to existing cust...</div>
<div class="t" style="left:2483.74px;top:718.23px;font-size:28.2px;color:#222222;font-weight:400;transform:scaleX(0.9513);">Open (20%)</div>
<div class="t" style="left:2299.52px;top:823.02px;font-size:33.13px;color:#222222;font-weight:700;transform:scaleX(0.9351);">Activities</div>
<div class="t" style="left:2299.04px;top:891.74px;font-size:29.61px;color:#666666;font-weight:400;transform:scaleX(1.0393);">04/11/2024</div>
<div class="t" style="left:2474.31px;top:891.74px;font-size:29.61px;color:#2b6cbf;font-weight:400;transform:scaleX(0.9477);">Follow-up call</div>
<div class="t" style="left:2299.04px;top:943.74px;font-size:29.61px;color:#666666;font-weight:400;transform:scaleX(1.0393);">01/11/2024</div>
<div class="t" style="left:2475.20px;top:943.74px;font-size:29.61px;color:#2b6cbf;font-weight:400;transform:scaleX(0.9344);">Quote for 45 components...</div>
<div class="t" style="left:2298.57px;top:995.74px;font-size:29.61px;color:#666666;font-weight:400;transform:scaleX(1.0269);">23/09/2024</div>
<div class="t" style="left:2474.31px;top:995.74px;font-size:29.61px;color:#2b6cbf;font-weight:400;transform:scaleX(0.9455);">Prospect meeting</div>
<div class="t" style="left:2298.57px;top:1047.74px;font-size:29.61px;color:#666666;font-weight:400;transform:scaleX(1.0269);">22/09/2024</div>
<div class="t" style="left:2474.23px;top:1047.74px;font-size:29.61px;color:#2b6cbf;font-weight:400;transform:scaleX(0.9822);">Introduction call</div>
<div class="t" style="left:2299.53px;top:1169.12px;font-size:33.13px;color:#222222;font-weight:700;transform:scaleX(0.9069);">Stakeholders</div>
<div class="t" style="left:2299.59px;top:1238.74px;font-size:29.61px;color:#666666;font-weight:400;transform:scaleX(0.8833);">James Vargas</div>
<div class="t" style="left:2297.95px;top:1291.24px;font-size:29.61px;color:#666666;font-weight:400;transform:scaleX(0.8883);">Lisa Jansson</div>
</body></html>
